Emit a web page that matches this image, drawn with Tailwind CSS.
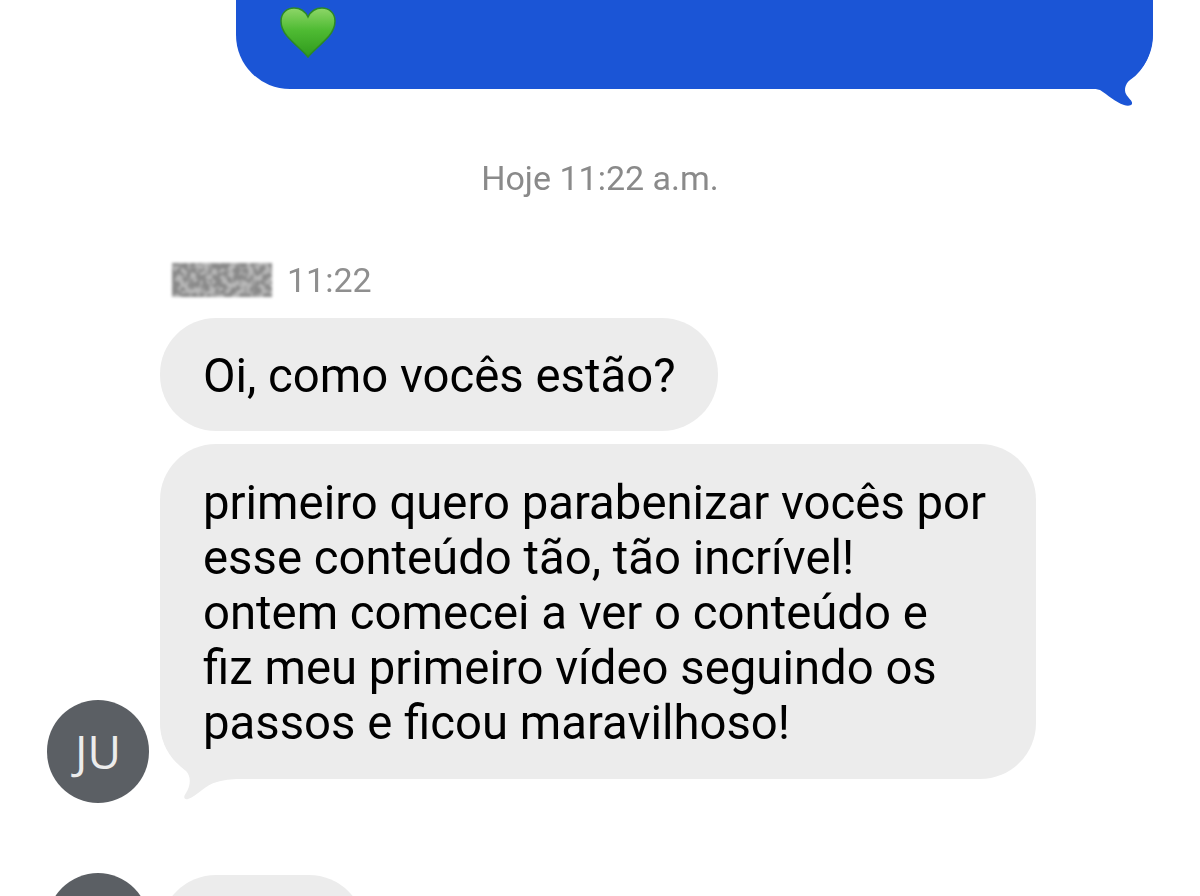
<!DOCTYPE html>
<html lang="pt">
<head>
    <meta charset="UTF-8">
    <meta name="viewport" content="width=device-width, initial-scale=1.0">
    <title>Mensagens</title>
    <script src="https://cdn.jsdelivr.net/npm/@tailwindcss/browser@4"></script>
</head>
<body class="bg-white font-['Roboto',sans-serif]">
    <div class="w-[1200px] h-[896px] overflow-hidden flex flex-col *:shrink-0">

        <!-- mensagem enviada -->
        <div class="pl-[236px] pr-[47px]">
            <div class="relative h-[89px] bg-[#1b55d6] rounded-b-[54px]">
                <svg class="absolute left-[44px] top-[6px] blur-[0.5px]" width="56" height="53" viewBox="0 0 56 53">
                    <defs>
                        <linearGradient id="coracao" x1="0" y1="0" x2="0" y2="1">
                            <stop offset="0" stop-color="#8ed668"/>
                            <stop offset="0.45" stop-color="#4fbb33"/>
                            <stop offset="1" stop-color="#2f9a1c"/>
                        </linearGradient>
                    </defs>
                    <path d="M28 51 C24 46 14 38 7 30 C2 24 1 20 1 15 C1 7 7 2 14 2 C20 2 25 5 28 11 C31 5 36 2 42 2 C49 2 55 7 55 15 C55 20 54 24 49 30 C42 38 32 46 28 51 Z" fill="url(#coracao)" stroke="#2c8a24" stroke-width="1.5"/>
                </svg>
                <svg class="absolute right-[-7px] top-[30px]" width="70" height="80" viewBox="1090 30 70 80">
                    <path d="M1153 30 C1153 52 1145 70 1130 80 C1125 84 1124 90 1126 94 C1128 98 1133 101 1132 104 C1131 106 1127 106 1124 105 C1115 102 1108 95 1100 90 C1097 89 1095 89 1090 89 L1090 30 Z" fill="#1b55d6"/>
                </svg>
            </div>
        </div>

        <p class="mt-[69px] text-center text-[34px] leading-[40px] text-[#8a8a8a] blur-[0.4px]">Hoje 11:22 a.m.</p>

        <!-- remetente -->
        <div class="mt-[58px] pl-[172px] flex items-center gap-[15px] h-[48px]">
            <svg class="blur-[1.5px]" width="100" height="34" viewBox="0 0 100 34">
                <filter id="ruido">
                    <feTurbulence type="fractalNoise" baseFrequency="0.16" numOctaves="2" seed="7"/>
                    <feColorMatrix values="0 0 0 0 0.25  0 0 0 0 0.25  0 0 0 0 0.25  6 0 0 0 -2.4"/>
                </filter>
                <rect width="100" height="34" fill="#b8b8b8"/>
                <rect width="100" height="34" filter="url(#ruido)"/>
            </svg>
            <span class="text-[34px] leading-[40px] text-[#8f8f8f] blur-[0.4px]">11:22</span>
        </div>

        <div class="mt-[14px] ml-[160px] w-fit pl-[43px] pr-[42px] pt-[3px] h-[113px] flex items-center rounded-[56px] bg-[#ececec] text-[47.3px] text-black"><span class="blur-[0.4px]">Oi, como vocês estão?</span></div>

        <!-- balão com avatar -->
        <div class="mt-[13px] pl-[47px] flex gap-[11px]">
            <div class="w-[102px] h-[103px] rounded-full bg-[#5b5f64] self-end translate-y-[24px] flex items-center justify-center text-[46px] font-normal font-['Open_Sans',sans-serif] text-[#ececec] shrink-0">JU</div>
            <div class="relative w-[876px] h-[335px] rounded-[56px] bg-[#ececec]">
                <svg class="absolute left-[0px] top-[276px]" width="90" height="90" viewBox="160 720 90 90">
                    <path d="M160 720 C161 745 172 760 186 771 C191 776 191 785 186 793 C183 797 184 800 188 799 C196 797 206 784 217 782 C224 780 230 779 240 779 L250 779 L250 720 Z" fill="#ececec"/>
                </svg>
                <div class="relative px-[43px] pt-[32px] text-[47.3px] leading-[55px] text-black whitespace-nowrap blur-[0.4px]">
                    primeiro quero parabenizar vocês por<br>
                    esse conteúdo tão, tão incrível!<br>
                    ontem comecei a ver o conteúdo e<br>
                    fiz meu primeiro vídeo seguindo os<br>
                    passos e ficou maravilhoso!
                </div>
            </div>
        </div>

        <!-- próxima mensagem, cortada -->
        <div class="mt-[94px] pl-[47px] flex gap-[11px]">
            <div class="w-[102px] h-[103px] rounded-full bg-[#5b5f64] shrink-0"></div>
            <div class="mt-[2px] w-[205px] h-[113px] rounded-[56px] bg-[#ececec]"></div>
        </div>
    </div>
</body>
</html>
